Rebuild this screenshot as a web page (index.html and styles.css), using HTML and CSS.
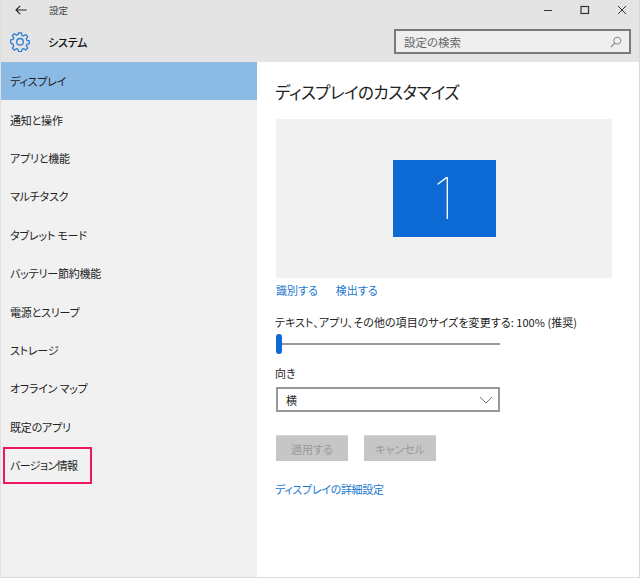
FILE: index.html
```html
<!DOCTYPE html>
<html lang="ja">
<head>
<meta charset="utf-8">
<title>設定</title>
<link rel="stylesheet" href="styles.css">
</head>
<body>
<div class="window">
  <header class="header">
    <div class="titlebar">
      <svg class="back" width="12" height="10" viewBox="0 0 12 10"><path d="M11.5 5H1M5.2 .8 1 5l4.2 4.2" fill="none" stroke="#222" stroke-width="1.1"/></svg>
      <span class="title">設定</span>
      <div class="controls">
        <svg width="10" height="10" viewBox="0 0 10 10"><path d="M1 5.5h8" stroke="#333" stroke-width="1"/></svg>
        <svg width="10" height="10" viewBox="0 0 10 10"><rect x="1" y="1.5" width="7.5" height="7" fill="none" stroke="#333" stroke-width="1.2"/></svg>
        <svg width="10" height="10" viewBox="0 0 10 10"><path d="M1 1l8 8M9 1 1 9" stroke="#333" stroke-width="1"/></svg>
      </div>
    </div>
    <div class="subbar">
      <svg class="gear" width="20" height="20" viewBox="0 0 20 20"><path d="M8.5 1h3l.5 2.6 1.6.7 2.2-1.5 2.1 2.1-1.5 2.2.7 1.6 2.4.5v3l-2.4.5-.7 1.6 1.5 2.2-2.1 2.1-2.2-1.5-1.6.7-.5 2.4h-3L8 17.9l-1.6-.7-2.2 1.5-2.1-2.1 1.5-2.2-.7-1.6L.5 11.3v-3L2.9 7.800l.7-1.600L2.100 4l2.100-2.100 2.200 1.500L8 2.700z" transform="translate(.2 -.2) scale(.98)" fill="none" stroke="#2b7cd3" stroke-width="1.3" stroke-linejoin="round"/><circle cx="10" cy="9.800" r="3.300" fill="none" stroke="#2b7cd3" stroke-width="1.300"/></svg>
      <span class="section">システム</span>
      <div class="search">
        <span class="search-text">設定の検索</span>
        <svg width="12" height="12" viewBox="0 0 12 12"><circle cx="7.300" cy="4.700" r="3.500" fill="none" stroke="#888" stroke-width="1"/><path d="M4.800 7.200 1 11" stroke="#888" stroke-width="1.100"/></svg>
      </div>
    </div>
  </header>
  <div class="body">
    <nav class="sidebar">
      <div class="item selected">ディスプレイ</div>
      <div class="item">通知と操作</div>
      <div class="item">アプリと機能</div>
      <div class="item">マルチタスク</div>
      <div class="item">タブレット モード</div>
      <div class="item">バッテリー節約機能</div>
      <div class="item">電源とスリープ</div>
      <div class="item">ストレージ</div>
      <div class="item">オフライン マップ</div>
      <div class="item">既定のアプリ</div>
      <div class="item version">バージョン情報<span class="mark"></span></div>
    </nav>
    <main class="content">
      <h1 class="heading">ディスプレイのカスタマイズ</h1>
      <div class="preview"><div class="monitor">1</div></div>
      <div class="links"><a class="link">識別する</a><a class="link">検出する</a></div>
      <div class="label scale-label">テキスト、アプリ、その他の項目のサイズを変更する: 100% (推奨)</div>
      <div class="slider"><span class="thumb"></span></div>
      <div class="label orient-label">向き</div>
      <div class="select"><span>横</span>
        <svg width="14" height="8" viewBox="0 0 14 8"><path d="M1 1l6 6 6-6" fill="none" stroke="#777" stroke-width="1"/></svg>
      </div>
      <div class="buttons"><button class="btn">適用する</button><button class="btn">キャンセル</button></div>
      <a class="link detail">ディスプレイの詳細設定</a>
    </main>
  </div>
</div>
</body>
</html>
```
FILE: styles.css
```css
* { box-sizing: border-box; }
html, body { margin: 0; padding: 0; }
body {
  width: 640px;
  height: 578px;
  overflow: hidden;
  background: #fff;
  font-family: "Noto Sans CJK JP", "Noto Sans", sans-serif;
  font-size: 11px;
  font-feature-settings: "palt";
  color: #222;
}
.window {
  width: 640px;
  height: 578px;
  display: flex;
  flex-direction: column;
  border-left: 1px solid #e0e0e0;
  border-right: 1px solid #d8d8d8;
  border-bottom: 1px solid #dcdcdc;
}
.header { height: 62px; background: #e4e4e4; flex: none; }
.titlebar { height: 20px; display: flex; align-items: center; padding: 0 0 0 14px; }
.back { margin-right: 22px; }
.title { font-size: 9.500px; color: #444; }
.controls { margin-left: auto; display: flex; gap: 27px; padding-right: 12px; }
.subbar { height: 42px; display: flex; align-items: center; padding: 1px 8px 0 9px; }
.gear { margin-right: 18px; }
.section { font-size: 11px; letter-spacing: -.2px; font-weight: 500; color: #111; }
.search {
  margin-left: auto;
  width: 237px;
  height: 25px;
  border: 2px solid #7a7a7a;
  background: #efefef;
  display: flex;
  align-items: center;
  justify-content: space-between;
  padding: 0 7px 0 8px;
}
.search-text { font-size: 11.500px; color: #666; }
.body { flex: 1; display: flex; min-height: 0; }
.sidebar { width: 256px; background: #f1f1f1; flex: none; }
.item {
  height: 38.400px;
  display: flex;
  align-items: center;
  padding-left: 9px;
  letter-spacing: -.2px;
  position: relative;
}
.version { letter-spacing: -.6px; }
.selected { background: #8bbae5; }
.mark {
  position: absolute;
  left: 2px;
  top: 1px;
  width: 89px;
  height: 37px;
  border: 2px solid #ee1566;
}
.content { flex: 1; padding: 16px 0 0 18px; }
.heading { margin: 0; font-size: 16.500px; letter-spacing: -.5px; font-weight: 400; line-height: 28px; color: #222; }
.preview {
  margin-top: 13px;
  margin-left: 1px;
  width: 336px;
  height: 159px;
  background: #f1f1f1;
  display: flex;
  justify-content: center;
  align-items: center;
}
.monitor {
  width: 103px;
  height: 77px;
  background: #0d69d3;
  color: #fff;
  font-family: Inter, sans-serif;
  font-weight: 100;
  font-size: 57px;
  line-height: 77px;
  text-align: center;
}
.links { display: flex; gap: 18px; margin-top: 3px; margin-left: 1px; height: 18px; align-items: center; }
.link { color: #1a78d0; font-size: 11px; }
.label { font-size: 11px; color: #222; line-height: 18px; }
.scale-label { margin-top: 14px; letter-spacing: .05px; }
.slider { position: relative; width: 224px; height: 2px; background: #999; margin-top: 12px; margin-left: 1px; }
.thumb {
  position: absolute;
  left: 0;
  top: -9px;
  width: 6px;
  height: 20px;
  border-radius: 3px;
  background: #0d69d3;
}
.orient-label { margin-top: 19px; }
.select {
  margin-top: 5px;
  margin-left: 1px;
  width: 224px;
  height: 25px;
  border: 2px solid #999;
  display: flex;
  align-items: center;
  justify-content: space-between;
  padding: 0 5px 0 8px;
  background: #fff;
}
.buttons { display: flex; gap: 16px; margin-top: 23px; margin-left: 1px; }
.btn {
  width: 72px;
  height: 26px;
  border: 0;
  border-top: 1px solid #d4d4d4;
  padding: 0;
  background: #c6c6c6;
  color: #9a9a9a;
  font: inherit;
}
.detail { display: block; margin-top: 19px; line-height: 18px; letter-spacing: -.3px; }
```
